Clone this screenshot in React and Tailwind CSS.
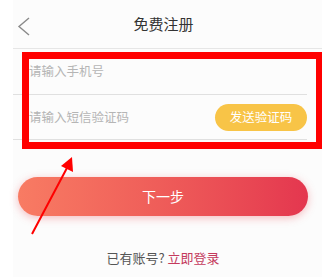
export default function App() {
    const font = { fontFamily: '"Noto Sans CJK SC", "Noto Sans", sans-serif' };

    return (
        <div className="relative w-[322px] h-[277px] bg-white overflow-hidden" style={font}>
            <div className="ml-[13px] w-[309px] h-full bg-[#fcfcfc]">
                {/* Header */}
                <div className="relative h-[49px] flex items-center border-b border-[#e6e6e6]">
                    <svg className="absolute left-[4px] top-[17px]" width="14" height="20" viewBox="0 0 14 20">
                        <polyline points="12,1 2,9.5 12,18" fill="none" stroke="#8a8a8a" strokeWidth="1.4" />
                    </svg>
                    <div className="w-[301px] text-center text-[15px] text-[#333]">免费注册</div>
                </div>

                {/* Form */}
                <div className="w-[294px]">
                    <div className="h-[46px] flex items-center pl-[16px] border-b border-[#e0e0e0]">
                        <span className="text-[12.5px] text-[#b5b5b5]">请输入手机号</span>
                    </div>
                    <div className="h-[45px] flex items-center justify-between pl-[16px] border-b border-[#e0e0e0]">
                        <span className="text-[12.5px] text-[#b5b5b5]">请输入短信验证码</span>
                        <button className="w-[92px] h-[27px] rounded-full bg-[#f8c447] text-white text-[12.5px]">
                            发送验证码
                        </button>
                    </div>
                </div>

                {/* Next */}
                <div className="mt-[37px] pl-[5px] w-[300px]">
                    <button className="w-[290px] h-[39px] rounded-full bg-gradient-to-r from-[#f87b63] to-[#e4364f] text-white text-[14px] shadow-[0_2px_8px_rgba(232,70,80,0.35)]">
                        下一步
                    </button>
                </div>

                <div className="mt-[32px] w-[300px] text-center text-[13px]">
                    <span className="text-[#555]">已有账号? </span>
                    <span className="text-[#c43a5c]">立即登录</span>
                </div>
            </div>

            {/* Annotation box */}
            <div className="absolute left-[22px] top-[52px] w-[301px] h-[97px] border-[7px] border-[#ff0000]" />

            {/* Annotation arrow */}
            <svg className="absolute left-0 top-0" width="322" height="277" viewBox="0 0 322 277">
                <line x1="32" y1="234" x2="68" y2="166" stroke="#ff0000" strokeWidth="2" />
                <polygon points="72,157 73,172 61,166" fill="#ff0000" />
            </svg>
        </div>
    );
}
